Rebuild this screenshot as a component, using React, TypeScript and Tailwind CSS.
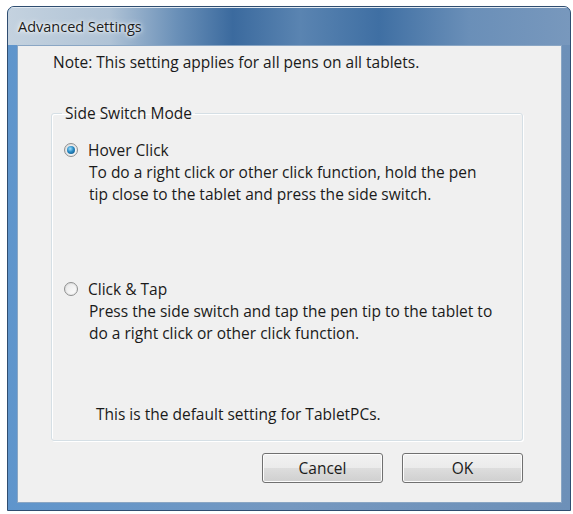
import React from 'react';

const Radio: React.FC<{ checked?: boolean }> = ({ checked }) => (
  <span className="w-[14px] h-[14px] rounded-full border border-[#8e8f8f] bg-gradient-to-br from-[#e6e6e6] to-[#ffffff] flex items-center justify-center shrink-0 shadow-[inset_0_0_2px_rgba(0,0,0,0.15)]">
    {checked && (
      <span className="w-[8px] h-[8px] rounded-full bg-[radial-gradient(circle_at_40%_35%,#9fe0ff_0%,#2a8bc4_45%,#0d4a7a_100%)]" />
    )}
  </span>
);

const Button: React.FC<{ label: string }> = ({ label }) => (
  <button className="w-[121px] h-[30px] rounded-[3px] border border-[#707070] bg-[linear-gradient(to_bottom,#f2f2f2_0%,#ebebeb_50%,#dddddd_51%,#cfcfcf_100%)] shadow-[inset_0_0_0_1px_#fcfcfc] text-[15.5px] text-[#1b1b1b]">
    {label}
  </button>
);

export default function App() {
  return (
    <div className="w-[573px] h-[514px] bg-white pt-[6px] pl-[7px] font-['Open_Sans','Noto_Sans',sans-serif]">
      <div className="w-[564px] h-[505px] rounded-t-[7px] border border-[#2f4d70] bg-[#5e8dbf] flex flex-col overflow-hidden">
        <div className="h-[38px] shrink-0 flex items-center pl-[10px] pt-[2px] bg-[linear-gradient(to_right,#c4d2df_0%,#b0c3d6_18%,#6a90b8_30%,#3b6a9e_40%,#5a84b1_52%,#3f6fa3_66%,#6a8fb8_82%,#7898bd_100%)] shadow-[inset_0_1px_0_#e2eaf2]">
          <span className="text-[14.5px] text-[#1c1c1c] [text-shadow:0_0_6px_#ffffff,0_0_3px_#ffffff]">Advanced Settings</span>
        </div>
        <div className="flex-1 flex px-[8px] pb-[7px] pl-[9px] bg-[linear-gradient(to_right,#5f95cc,#7598c0_50%,#6d90b8)]">
          <div className="flex-1 bg-[#f0f0f0] border border-[#8aa6c4] flex flex-col text-[15.5px] text-[#1a1a1a] leading-[22px]">
            <div className="pl-[35px] pt-[5px]">Note: This setting applies for all pens on all tablets.</div>
            <fieldset className="ml-[33px] mr-[38px] mt-[29px] border border-[#d5dfe5] rounded-[3px] shadow-[inset_1px_1px_0_#ffffff,1px_1px_0_#ffffff] pt-[15px] pb-[15px]">
              <legend className="ml-[10px] px-[3px]">Side Switch Mode</legend>
              <div className="pl-[12px]">
                <label className="flex items-center gap-[10px]">
                  <Radio checked />
                  <span>Hover Click</span>
                </label>
                <div className="pl-[25px]">
                  <div>To do a right click or other click function, hold the pen</div>
                  <div>tip close to the tablet and press the side switch.</div>
                </div>
                <label className="flex items-center gap-[10px] mt-[73px]">
                  <Radio />
                  <span>Click &amp; Tap</span>
                </label>
                <div className="pl-[25px]">
                  <div>Press the side switch and tap the pen tip to the tablet to</div>
                  <div>do a right click or other click function.</div>
                </div>
                <div className="pl-[32px] mt-[59px]">This is the default setting for TabletPCs.</div>
              </div>
            </fieldset>
            <div className="flex justify-end gap-[19px] mr-[38px] mt-[12px]">
              <Button label="Cancel" />
              <Button label="OK" />
            </div>
          </div>
        </div>
      </div>
    </div>
  );
}
